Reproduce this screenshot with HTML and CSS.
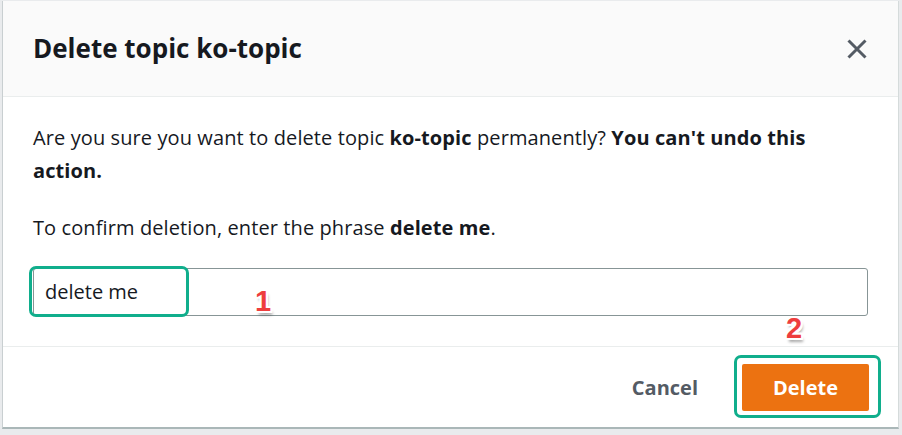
FILE: index.html
```html
<!DOCTYPE html>
<html>
<head>
<meta charset="utf-8">
<link rel="stylesheet" href="styles.css">
</head>
<body>
<div class="modal">
  <div class="modal-header">
    <h2 class="modal-title">Delete topic ko-topic</h2>
    <button class="close-btn" aria-label="Close">
      <svg width="20" height="20" viewBox="0 0 20 20"><path d="M1.5 1.5 L18.5 18.5 M18.5 1.5 L1.5 18.5" stroke="#545b64" stroke-width="3" stroke-linecap="butt" fill="none"/></svg>
    </button>
  </div>
  <div class="modal-body">
    <p class="text">Are you sure you want to delete topic <b>ko-topic</b> permanently? <b>You can't undo this action.</b></p>
    <p class="text confirm">To confirm deletion, enter the phrase <b>delete me</b>.</p>
    <div class="input-wrap">
      <div class="input">delete me</div>
      <span class="mark mark-input"></span>
      <span class="badge badge-1">1</span>
    </div>
  </div>
  <div class="modal-footer">
    <button class="btn-link">Cancel</button>
    <div class="primary-wrap">
      <button class="btn-primary">Delete</button>
      <span class="mark mark-btn"></span>
      <span class="badge badge-2">2</span>
    </div>
  </div>
</div>
</body>
</html>
```
FILE: styles.css
```css
html, body {
  margin: 0;
  padding: 0;
}
body {
  background: #e9ebed;
  width: 902px;
  height: 435px;
  overflow: hidden;
  font-family: "Open Sans", "Noto Sans", sans-serif;
  color: #16191f;
}
.modal {
  margin: 1px 3px 0 2px;
  height: 428px;
  box-sizing: border-box;
  background: #fff;
  border-left: 1px solid #c9cfd1;
  border-right: 1px solid #d5dbdb;
  border-bottom: 2px solid #aab7b8;
  display: flex;
  flex-direction: column;
}
.modal-header {
  height: 96px;
  box-sizing: border-box;
  background: #fafafa;
  border-bottom: 1px solid #eaeded;
  display: flex;
  align-items: center;
  justify-content: space-between;
  padding: 0 30px 0 30px;
}
.modal-title {
  margin: 0 0 2px 0;
  font-size: 26px;
  font-weight: 700;
  letter-spacing: 0;
  line-height: 34px;
}
.close-btn {
  border: 0;
  background: transparent;
  padding: 0;
  width: 20px;
  height: 20px;
  display: flex;
  margin-right: 1px;
}
.modal-body {
  padding: 24px 30px 30px 30px;
  border-bottom: 1px solid #eaeded;
}
.text {
  margin: 0;
  font-size: 20px;
  line-height: 33px;
  letter-spacing: 0.1px;
}
.text b {
  font-weight: 700;
}
.confirm {
  margin-top: 24px;
}
.input-wrap {
  position: relative;
  margin-top: 24px;
}
.input {
  height: 48px;
  box-sizing: border-box;
  border: 1px solid #879596;
  border-radius: 3px;
  padding: 0 11px;
  font-size: 20px;
  line-height: 46px;
}
.mark {
  position: absolute;
  border: 3px solid #10ae8c;
  border-radius: 7px;
  box-sizing: border-box;
}
.mark-input {
  left: -4px;
  top: -2px;
  width: 160px;
  height: 51px;
}
.badge {
  position: absolute;
  font-family: "Liberation Sans", sans-serif;
  font-weight: 700;
  font-size: 29px;
  line-height: 29px;
  color: #ee3e3e;
  text-shadow:
    -2px 0 0 #fff, 2px 0 0 #fff, 0 -2px 0 #fff, 0 2px 0 #fff,
    -2px -2px 0 #fff, 2px -2px 0 #fff, -2px 2px 0 #fff, 2px 2px 0 #fff,
    2px 4px 3px rgba(0,0,0,0.35);
}
.badge-1 {
  left: 222px;
  top: 19px;
}
.badge-2 {
  left: 44px;
  top: -50px;
}
.modal-footer {
  flex: 1;
  display: flex;
  align-items: center;
  justify-content: flex-end;
  padding: 0 29px 0 30px;
  gap: 30px;
}
.btn-link {
  border: 0;
  background: transparent;
  font-family: inherit;
  font-size: 20px;
  font-weight: 700;
  color: #545b64;
  padding: 0 14px;
  height: 47px;
}
.primary-wrap {
  position: relative;
  display: flex;
}
.btn-primary {
  width: 127px;
  height: 47px;
  border: 0;
  border-radius: 2px;
  background: #ec7211;
  color: #fff;
  font-family: inherit;
  font-size: 20px;
  font-weight: 700;
  padding: 0;
}
.mark-btn {
  left: -8px;
  top: -9px;
  width: 147px;
  height: 63px;
}
```
